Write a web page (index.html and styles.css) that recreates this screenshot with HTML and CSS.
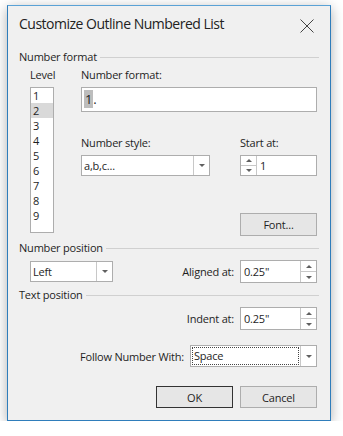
FILE: index.html
```html
<!DOCTYPE html>
<html>
<head>
<meta charset="utf-8">
<link rel="stylesheet" href="styles.css">
</head>
<body>
<div class="window">
  <div class="titlebar">
    <span class="title">Customize Outline Numbered List</span>
    <svg class="close" width="14" height="14" viewBox="0 0 14 14"><path d="M0.5 0.5 L13.5 13.5 M13.5 0.5 L0.5 13.5" stroke="#444" stroke-width="1" fill="none"/></svg>
  </div>
  <div class="content">
    <div class="group-head"><span>Number format</span><i></i></div>
    <div class="nf">
      <div class="level-col">
        <div class="lbl">Level</div>
        <ul class="levels">
          <li>1</li><li class="on">2</li><li>3</li><li>4</li><li>5</li><li>6</li><li>7</li><li>8</li><li>9</li>
        </ul>
      </div>
      <div class="nf-right">
        <div class="lbl">Number format:</div>
        <div class="input fmt"><span class="sel">1</span>.</div>
        <div class="row2">
          <div class="style-col">
            <div class="lbl">Number style:</div>
            <div class="combo style"><span class="val">a,b,c...</span><span class="drop"><b></b></span></div>
          </div>
          <div class="start-col">
            <div class="lbl">Start at:</div>
            <div class="spin">
              <span class="spinbtns"><span class="up"><b></b></span><span class="dn"><b></b></span></span>
              <span class="val">1</span>
            </div>
          </div>
        </div>
        <div class="font-row"><button class="btn">Font...</button></div>
      </div>
    </div>

    <div class="group-head gh2"><span>Number position</span><i></i></div>
    <div class="row pos-row">
      <div class="combo left"><span class="val">Left</span><span class="drop"><b></b></span></div>
      <div class="field">
        <span class="flbl">Aligned at:</span>
        <div class="spin">
          <span class="val">0.25"</span>
          <span class="spinbtns"><span class="up"><b></b></span><span class="dn"><b></b></span></span>
        </div>
      </div>
    </div>

    <div class="group-head gh3"><span>Text position</span><i></i></div>
    <div class="row indent-row">
      <div class="field">
        <span class="flbl">Indent at:</span>
        <div class="spin">
          <span class="val">0.25"</span>
          <span class="spinbtns"><span class="up"><b></b></span><span class="dn"><b></b></span></span>
        </div>
      </div>
    </div>

    <div class="row follow-row">
      <span class="flbl">Follow Number With:</span>
      <div class="combo follow"><span class="val"><span class="focus">Space</span></span><span class="drop"><b></b></span></div>
    </div>

    <div class="row buttons">
      <button class="btn ok">OK</button>
      <button class="btn">Cancel</button>
    </div>
  </div>
</div>
</body>
</html>
```

FILE: styles.css
```css
* { box-sizing: border-box; }
html, body { margin: 0; padding: 0; background: #ffffff; }
body {
  font-family: "Open Sans", "Noto Sans", sans-serif;
  font-size: 11px;
  letter-spacing: -0.2px;
  color: #1e1e1e;
}
.window {
  margin: 5px 0 0 7px;
  width: 324px;
  height: 416px;
  background: #f0f0f0;
  border: 1px solid #2f7dbb;
  border-top-color: #5aa2d6;
  box-shadow: 0 3px 12px rgba(0, 0, 0, 0.32);
  display: flex;
  flex-direction: column;
}
.titlebar {
  height: 43px;
  display: flex;
  align-items: flex-start;
  justify-content: space-between;
  padding: 5px 16px 0 11px;
}
.title {
  font-size: 14px;
  letter-spacing: -0.5px;
  line-height: 22px;
  color: #222;
  margin-top: 2px;
}
.close { margin-top: 8px; }
.content {
  padding: 0 13px 0 11px;
  display: flex;
  flex-direction: column;
}
.group-head {
  height: 16px;
  display: flex;
  align-items: center;
  margin-right: -2px;
  line-height: 16px;
}
.group-head i {
  flex: 1;
  height: 1px;
  background: #d0d0d0;
  margin-left: 3px;
}
.lbl {
  height: 16px;
  line-height: 16px;
  margin: 2px 0 4px;
}
.nf {
  display: flex;
  height: 170px;
}
.level-col {
  margin-left: 11px;
  width: 24px;
}
.levels {
  list-style: none;
  margin: 0;
  padding: 0;
  width: 24px;
  height: 146px;
  background: #fff;
  border: 1px solid #adadad;
}
.levels li {
  height: 15px;
  line-height: 15px;
  padding-left: 2px;
}
.levels li.on { background: #d9d9d9; }
.nf-right {
  margin-left: 27px;
  flex: 1;
  display: flex;
  flex-direction: column;
}
.input {
  background: #fff;
  border: 1px solid #adadad;
}
.fmt {
  height: 25px;
  line-height: 21px;
  padding: 1px 2px;
  font-size: 13px;
}
.fmt .sel { background: #bdbdbd; padding: 0 1px; }
.row2 {
  display: flex;
  justify-content: space-between;
  margin-top: 21px;
}
.style-col { width: 129px; }
.start-col { width: 77px; }
.combo {
  height: 21px;
  display: flex;
  background: #fff;
  border: 1px solid #adadad;
}
.combo .val {
  flex: 1;
  line-height: 19px;
  padding-left: 2px;
}
.combo .drop {
  width: 16px;
  border-left: 1px solid #c8c8c8;
  display: flex;
  align-items: center;
  justify-content: center;
}
.combo .drop b, .spin .dn b {
  width: 0; height: 0;
  border-left: 3px solid transparent;
  border-right: 3px solid transparent;
  border-top: 3px solid #606060;
}
.spin .up b {
  width: 0; height: 0;
  border-left: 3px solid transparent;
  border-right: 3px solid transparent;
  border-bottom: 3px solid #606060;
}
.spin {
  height: 21px;
  width: 77px;
  display: flex;
  background: #fff;
  border: 1px solid #adadad;
}
.spin .val {
  flex: 1;
  line-height: 19px;
  padding-left: 3px;
}
.spinbtns {
  width: 16px;
  display: flex;
  flex-direction: column;
  border-left: 1px solid #c8c8c8;
}
.start-col .spinbtns { border-left: 0; border-right: 1px solid #c8c8c8; }
.spinbtns span {
  flex: 1;
  display: flex;
  align-items: center;
  justify-content: center;
}
.spinbtns .up { border-bottom: 1px solid #c8c8c8; }
.font-row {
  display: flex;
  justify-content: flex-end;
  margin-top: 37px;
}
.btn {
  font-family: inherit;
  font-size: 11px;
  letter-spacing: -0.2px;
  color: #1e1e1e;
  width: 77px;
  height: 23px;
  background: #e6e6e6;
  border: 1px solid #adadad;
  padding: 0;
  margin: 0;
}
.row { display: flex; align-items: center; }
.gh2 { margin-top: 5px; }
.pos-row {
  height: 23px;
  margin-top: 4px;
  justify-content: space-between;
  padding-left: 11px;
}
.combo.left { width: 83px; }
.field { display: flex; align-items: center; }
.flbl { margin-right: 6px; }
.pos-row .spin, .indent-row .spin { height: 23px; }
.pos-row .spin .val, .indent-row .spin .val { line-height: 21px; }
.gh3 { margin-top: 4px; }
.indent-row {
  height: 23px;
  margin-top: 4px;
  justify-content: flex-end;
}
.follow-row {
  height: 22px;
  margin-top: 15px;
  justify-content: flex-end;
}
.combo.follow { width: 127px; height: 22px; }
.combo.follow .val { line-height: 18px; padding: 1px; }
.focus {
  display: block;
  border: 1px dotted #444;
  padding-left: 1px;
  height: 18px;
  line-height: 16px;
}
.buttons {
  margin-top: 19px;
  justify-content: flex-end;
  gap: 7px;
}
.buttons .btn { height: 22px; }
.btn.ok { border-color: #333; }
```
